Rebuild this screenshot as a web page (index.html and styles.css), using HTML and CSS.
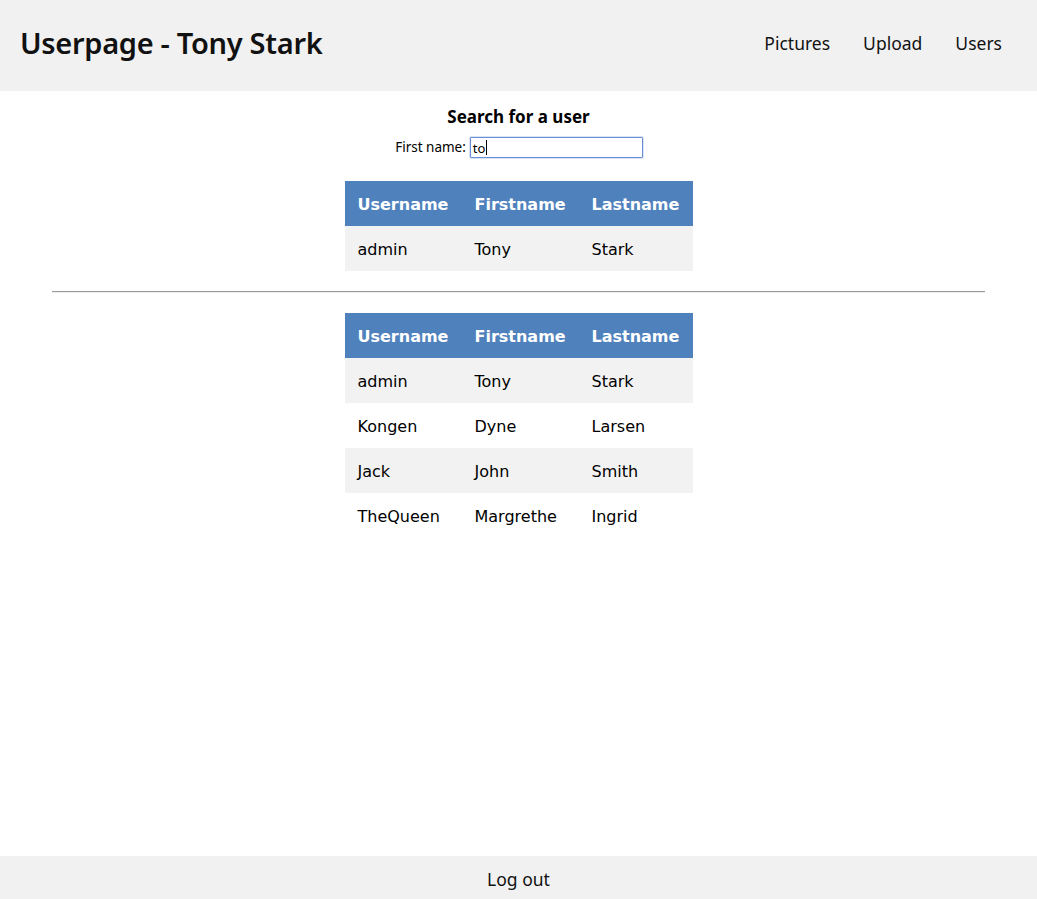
FILE: index.html
```html
<!DOCTYPE html>
<html>
<head>
<meta charset="utf-8">
<title>Userpage - Tony Stark</title>
<link rel="stylesheet" href="styles.css">
</head>
<body>
<header class="topbar">
  <h1 class="title">Userpage - Tony Stark</h1>
  <nav class="nav">
    <a class="nav-link" href="#">Pictures</a>
    <a class="nav-link" href="#">Upload</a>
    <a class="nav-link" href="#">Users</a>
  </nav>
</header>
<main class="content">
  <h3 class="search-title">Search for a user</h3>
  <div class="search-row">
    <label class="search-label" for="fname">First name:</label>
    <div class="search-input"><span class="typed">to</span><span class="caret"></span></div>
  </div>
  <table class="users first">
    <colgroup><col class="c1"><col class="c2"><col class="c3"></colgroup>
    <thead><tr><th>Username</th><th>Firstname</th><th>Lastname</th></tr></thead>
    <tbody>
      <tr><td>admin</td><td>Tony</td><td>Stark</td></tr>
    </tbody>
  </table>
  <hr class="divider">
  <table class="users">
    <colgroup><col class="c1"><col class="c2"><col class="c3"></colgroup>
    <thead><tr><th>Username</th><th>Firstname</th><th>Lastname</th></tr></thead>
    <tbody>
      <tr><td>admin</td><td>Tony</td><td>Stark</td></tr>
      <tr><td>Kongen</td><td>Dyne</td><td>Larsen</td></tr>
      <tr><td>Jack</td><td>John</td><td>Smith</td></tr>
      <tr><td>TheQueen</td><td>Margrethe</td><td>Ingrid</td></tr>
    </tbody>
  </table>
</main>
<footer class="footer"><a class="logout" href="#">Log out</a></footer>
</body>
</html>
```
FILE: styles.css
```css
html, body {
  margin: 0;
  padding: 0;
  background: #ffffff;
}
body {
  font-family: "Noto Sans", "Open Sans", sans-serif;
  color: #000;
}
.topbar {
  height: 91px;
  background: #f1f1f1;
  display: flex;
  align-items: center;
  justify-content: space-between;
  padding: 0 35px 0 20px;
}
.title {
  margin: 0;
  font-size: 29px;
  font-weight: 600;
  color: #111;
  letter-spacing: -0.3px;
  line-height: 40px;
  padding-bottom: 6px;
}
.nav {
  display: flex;
  gap: 33px;
  padding-bottom: 6px;
}
.nav-link {
  font-size: 17.5px;
  color: #111;
  text-decoration: none;
  line-height: 26px;
}
.content {
  text-align: center;
}
.search-title {
  margin: 14px 0 0;
  font-size: 17px;
  font-weight: 700;
  line-height: 24px;
}
.search-row {
  display: flex;
  justify-content: center;
  align-items: center;
  gap: 4px;
  margin-top: 8px;
  height: 21px;
  padding-left: 1px;
}
.search-label {
  font-size: 13.5px;
  line-height: 21px;
}
.search-input {
  box-sizing: border-box;
  width: 173px;
  height: 21px;
  border: 1px solid #6b8fd6;
  border-radius: 1px;
  box-shadow: 0 0 0 1px rgba(107,143,214,0.25);
  display: flex;
  align-items: center;
  padding-left: 2px;
  font-size: 13px;
  text-align: left;
}
.caret {
  display: inline-block;
  width: 1px;
  height: 15px;
  background: #000;
  margin-left: 1px;
}
.users {
  margin: 23px auto 0;
  border-collapse: collapse;
  table-layout: fixed;
  width: 348px;
  font-family: "DejaVu Sans", Verdana, sans-serif;
  font-size: 16px;
  text-align: left;
}
.users .c1 { width: 117px; }
.users .c2 { width: 117px; }
.users .c3 { width: 114px; }
.users th, .users td {
  height: 45px;
  padding: 2px 0 0 13px;
  box-sizing: border-box;
  white-space: nowrap;
}
.users th {
  background: #4f81bd;
  color: #fff;
  font-weight: 700;
}
.users td {
  color: #000;
}
.users tbody tr:nth-child(odd) td {
  background: #f2f2f2;
}
.divider {
  width: 90%;
  margin: 20px auto 0;
  border: 0;
  border-top: 1px solid #9a9a9a;
  border-bottom: 1px solid #eeeeee;
  height: 0;
}
.users:not(.first) {
  margin-top: 20px;
}
.footer {
  position: fixed;
  left: 0;
  right: 0;
  bottom: 0;
  height: 43px;
  background: #f1f1f1;
  display: flex;
  justify-content: center;
  align-items: center;
}
.logout {
  font-size: 17.5px;
  color: #111;
  text-decoration: none;
  line-height: 26px;
  padding-top: 2px;
}
```
